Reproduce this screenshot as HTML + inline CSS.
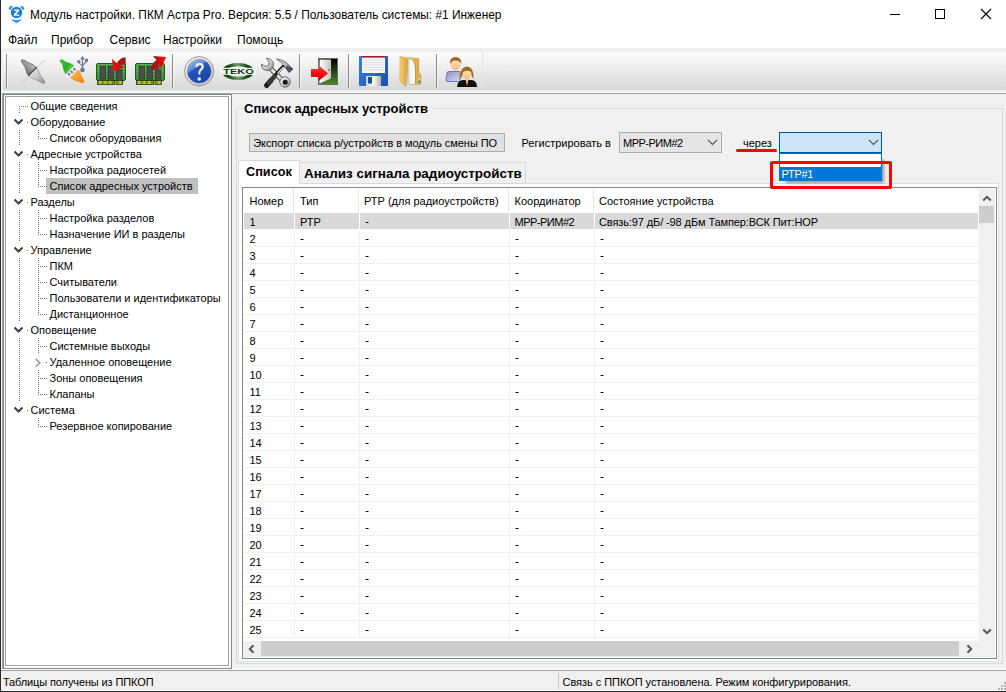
<!DOCTYPE html>
<html><head><meta charset="utf-8"><style>
html,body{margin:0;padding:0}
body{width:1006px;height:692px;position:relative;overflow:hidden;background:#f0f0f0;font-family:"Liberation Sans", sans-serif;}
</style></head><body>
<div style="position:absolute;left:0px;top:0px;width:1006px;height:48px;background:#ffffff;"></div>
<div style="position:absolute;left:1px;top:48px;width:1005px;height:4px;background:#efefef;"></div>
<svg style="position:absolute;left:6px;top:2px" width="22" height="24" viewBox="0 0 22 24">
<circle cx="5.2" cy="6.2" r="2.3" fill="#3a94dc"/>
<circle cx="15.8" cy="6.2" r="2.3" fill="#3a94dc"/>
<circle cx="10.5" cy="10.5" r="6.6" fill="#fff"/>
<circle cx="10.5" cy="10.5" r="5.7" fill="#1a7fd0"/>
<path d="M7.9 7.6 H13.2 V8.8 L9.9 12.6 H13.3 V13.8 H7.7 V12.6 L11 8.8 H7.9 Z" fill="#fff"/>
<path d="M5.6 17 Q10.5 19.6 15.4 17 L14.6 18.4 Q10.5 21.6 6.4 18.4 Z" fill="#2a8ad8"/>
<path d="M7.5 19.6 Q10.5 21.2 13.5 19.6 L10.5 21.6 Z" fill="#2a8ad8"/>
</svg>
<div style="position:absolute;left:30px;top:5px;line-height:20px;font-size:11.9px;font-weight:normal;color:#000;white-space:pre;">Модуль настройки. ПКМ Астра Pro. Версия: 5.5 / Пользователь системы: #1 Инженер</div>
<div style="position:absolute;left:890px;top:14px;width:10px;height:1px;background:#000;"></div>
<div style="position:absolute;left:935px;top:9px;width:8px;height:8px;border:1px solid #000;background:transparent;"></div>
<svg style="position:absolute;left:980px;top:8px" width="12" height="12" viewBox="0 0 12 12"><path d="M1 1 L11 11 M11 1 L1 11" stroke="#000" stroke-width="1.1"/></svg>
<div style="position:absolute;left:8px;top:30px;line-height:20px;font-size:12px;font-weight:normal;color:#000;white-space:pre;">Файл</div>
<div style="position:absolute;left:51px;top:30px;line-height:20px;font-size:12px;font-weight:normal;color:#000;white-space:pre;">Прибор</div>
<div style="position:absolute;left:109.5px;top:30px;line-height:20px;font-size:12px;font-weight:normal;color:#000;white-space:pre;">Сервис</div>
<div style="position:absolute;left:163px;top:30px;line-height:20px;font-size:12px;font-weight:normal;color:#000;white-space:pre;">Настройки</div>
<div style="position:absolute;left:237px;top:30px;line-height:20px;font-size:12px;font-weight:normal;color:#000;white-space:pre;">Помощь</div>
<div style="position:absolute;left:3px;top:52px;width:1003px;height:38px;background:linear-gradient(#fcfcfc,#ebebeb 50%,#d8d8d8)"></div>
<div style="position:absolute;left:6px;top:54px;width:1px;height:34px;background:#8a8a8a;"></div>
<div style="position:absolute;left:7px;top:54px;width:1px;height:34px;background:rgba(255,255,255,0.6);"></div>
<div style="position:absolute;left:172px;top:54px;width:1px;height:34px;background:#8a8a8a;"></div>
<div style="position:absolute;left:173px;top:54px;width:1px;height:34px;background:rgba(255,255,255,0.6);"></div>
<div style="position:absolute;left:299px;top:54px;width:1px;height:34px;background:#8a8a8a;"></div>
<div style="position:absolute;left:300px;top:54px;width:1px;height:34px;background:rgba(255,255,255,0.6);"></div>
<div style="position:absolute;left:348px;top:54px;width:1px;height:34px;background:#8a8a8a;"></div>
<div style="position:absolute;left:349px;top:54px;width:1px;height:34px;background:rgba(255,255,255,0.6);"></div>
<div style="position:absolute;left:436px;top:54px;width:1px;height:34px;background:#8a8a8a;"></div>
<div style="position:absolute;left:437px;top:54px;width:1px;height:34px;background:rgba(255,255,255,0.6);"></div>
<div style="position:absolute;left:482px;top:53px;width:1px;height:36px;background:#e4e4e4;"></div>
<svg style="position:absolute;left:18px;top:54px" width="32" height="34" viewBox="0 0 32 34">
<defs>
<linearGradient id="g1" x1="0" y1="1" x2="1" y2="0"><stop offset="0" stop-color="#3a3a3a"/><stop offset="0.4" stop-color="#8a8a8a"/><stop offset="1" stop-color="#e0e0e0"/></linearGradient>
<linearGradient id="g2" x1="0" y1="0" x2="1" y2="1"><stop offset="0" stop-color="#f4f4f4"/><stop offset="0.55" stop-color="#c8c8c8"/><stop offset="1" stop-color="#8a8a8a"/></linearGradient>
</defs>
<path d="M26.5 6 L3.5 29.5" stroke="#c4c4c4" stroke-width="1"/>
<path d="M3.5 6 Q4 5.3 7 6.6 Q9 8.3 13 9.8 Q16 11 18.5 13.5 L10.5 21.5 Q8.5 19.5 8 16 Q7 12 5 10 Q3 8 3.5 6 Z" fill="url(#g1)" stroke="#4a4a4a" stroke-width="0.6"/>
<path d="M10.5 21.5 L18.5 13.5 Q20.5 15.5 21.5 19 Q22.5 22.5 25 25 Q27.8 27.8 26.5 29.2 Q25 29.8 22 27.8 Q18 25.5 14.5 24.5 Q12 23.5 10.5 21.5 Z" fill="url(#g2)" stroke="#8a8a8a" stroke-width="0.6"/>
<path d="M10.2 21.8 L18.8 13.2" stroke="#4a4a4a" stroke-width="1.3"/>
</svg>
<svg style="position:absolute;left:56px;top:54px" width="36" height="34" viewBox="0 0 36 34">
<defs>
<linearGradient id="gg" x1="0" y1="0" x2="1" y2="0.6"><stop offset="0" stop-color="#4ad038"/><stop offset="0.6" stop-color="#28b020"/><stop offset="1" stop-color="#7ae070"/></linearGradient>
<linearGradient id="go" x1="0" y1="0" x2="1" y2="1"><stop offset="0" stop-color="#ffc060"/><stop offset="1" stop-color="#f08000"/></linearGradient>
</defs>
<path d="M4 6.5 Q5 5.3 7.5 6.3 L9.5 8 Q14 9 17.8 11.5 L9.5 19.8 Q7 15 6.5 10 Q4 8 4 6.5 Z" fill="url(#gg)" stroke="#1a8a1a" stroke-width="0.5"/>
<path d="M12 19.2 L14 21.2 M14.7 16.8 L16.7 18.8 M17.4 14.4 L19.4 16.4" stroke="#6a7090" stroke-width="1.7"/>
<path d="M14.5 24 L22.5 16 Q25 19 25.5 22.5 Q28.5 26 28 28.5 Q26 29.5 24 28 Q19 27 14.5 24 Z" fill="url(#go)" stroke="#e88a20" stroke-width="0.5"/>
<g stroke="#6e7490" fill="#6e7490">
<path d="M26.5 3.5 V16" stroke-width="1.2"/>
<path d="M24.2 5.5 L26.5 2 L28.8 5.5 Z" stroke="none"/>
<path d="M22.8 8.5 L26.5 12.5 M30.5 7.5 L26.5 11.5" stroke-width="1.1" fill="none"/>
<circle cx="22.8" cy="7.6" r="1.7" stroke="none"/>
<rect x="29" y="4.8" width="3" height="3" stroke="none"/>
<circle cx="26.5" cy="16" r="2.3" stroke="none"/>
</g>
</svg>
<svg style="position:absolute;left:94px;top:54px" width="34" height="34" viewBox="0 0 34 34">
<defs>
<linearGradient id="gpcb" x1="0" y1="0" x2="0" y2="1"><stop offset="0" stop-color="#5aae4a"/><stop offset="1" stop-color="#2e8a2e"/></linearGradient>
<linearGradient id="gred1" x1="1" y1="0" x2="0" y2="1"><stop offset="0" stop-color="#8a1818"/><stop offset="0.45" stop-color="#c81010"/><stop offset="1" stop-color="#ff1010"/></linearGradient>
<pattern id="pc" width="1.25" height="4" patternUnits="userSpaceOnUse"><rect width="0.75" height="4" fill="#c8d040"/></pattern>
<g id="ram">
<rect x="2.5" y="9.5" width="29" height="17" rx="1.5" fill="url(#gpcb)" stroke="#1a5a1a" stroke-width="1"/>
<rect x="3.5" y="26.5" width="17" height="4" fill="#5a6a10" stroke="#1e3a08" stroke-width="0.8"/>
<rect x="3.9" y="26.9" width="16.2" height="3.2" fill="url(#pc)"/>
<rect x="22" y="26.5" width="6.5" height="4" fill="#5a6a10" stroke="#1e3a08" stroke-width="0.8"/>
<rect x="22.4" y="26.9" width="5.7" height="3.2" fill="url(#pc)"/>
<g fill="#8ad080"><circle cx="4.8" cy="14.5" r="0.6"/><circle cx="4.8" cy="17.5" r="0.6"/><circle cx="4.8" cy="20.5" r="0.6"/><circle cx="4.8" cy="23.5" r="0.6"/>
<circle cx="12.8" cy="14.5" r="0.6"/><circle cx="12.8" cy="17.5" r="0.6"/><circle cx="12.8" cy="20.5" r="0.6"/><circle cx="12.8" cy="23.5" r="0.6"/>
<circle cx="20.8" cy="17.5" r="0.6"/><circle cx="20.8" cy="20.5" r="0.6"/><circle cx="20.8" cy="23.5" r="0.6"/>
<circle cx="29.2" cy="17.5" r="0.6"/><circle cx="29.2" cy="20.5" r="0.6"/><circle cx="29.2" cy="23.5" r="0.6"/>
<circle cx="7.5" cy="11" r="0.6"/><circle cx="10" cy="11" r="0.6"/><circle cx="15.5" cy="11" r="0.6"/><circle cx="18" cy="11" r="0.6"/></g>
<rect x="6" y="12" width="5.5" height="13" fill="#4c4c4c" stroke="#262626" stroke-width="0.6"/>
<rect x="14" y="12" width="5.5" height="13" fill="#4c4c4c" stroke="#262626" stroke-width="0.6"/>
<rect x="22.5" y="16" width="5.5" height="9" fill="#4c4c4c" stroke="#262626" stroke-width="0.6"/>
</g>
</defs>
<use href="#ram"/>
<path d="M18 5 L19.5 17.8 L30.5 13 L26.5 11.2 Q28.5 9.8 31.6 11 L31.6 3.4 Q26 3.2 22.8 9.2 Z" fill="url(#gred1)"/>
</svg>
<svg style="position:absolute;left:133px;top:54px" width="34" height="34" viewBox="0 0 34 34">
<defs>
<linearGradient id="gred2" x1="0" y1="0" x2="1" y2="0"><stop offset="0" stop-color="#8a1818"/><stop offset="0.5" stop-color="#c81010"/><stop offset="1" stop-color="#ff1010"/></linearGradient>
</defs>
<use href="#ram"/>
<path d="M18.5 15.8 Q18 9.5 23.5 6 L20 2 L33 3 L28 15 L26.5 10.2 Q24.3 11.8 25.2 15.8 Z" fill="url(#gred2)"/>
<path d="M25.2 15.8 Q24.3 11.8 26.5 10.2 L27.2 12.5 Z" fill="#505050"/>
</svg>
<svg style="position:absolute;left:182px;top:54px" width="34" height="34" viewBox="0 0 34 34">
<defs>
<linearGradient id="gblue" x1="0" y1="0" x2="0.6" y2="1"><stop offset="0" stop-color="#a8c4f0"/><stop offset="0.42" stop-color="#5a88d8"/><stop offset="0.45" stop-color="#2a58c0"/><stop offset="1" stop-color="#1a3a98"/></linearGradient>
<linearGradient id="grim" x1="0" y1="0" x2="1" y2="1"><stop offset="0" stop-color="#ffffff"/><stop offset="1" stop-color="#c0c0c0"/></linearGradient>
</defs>
<circle cx="17.2" cy="17.2" r="14.6" fill="url(#grim)" stroke="#8a8a8a" stroke-width="0.9"/>
<circle cx="17.2" cy="17.2" r="12.1" fill="url(#gblue)" stroke="#a8a8a8" stroke-width="0.7"/>
<path d="M7 19 Q12 12 26 12 Q28 16 28.5 20 Q22 30 12 28 Q7 24 7 19 Z" fill="#2050b8" opacity="0.6"/>
<path d="M13.3 12.8 Q13.3 8.8 17.6 8.8 Q21.9 8.8 21.9 12.6 Q21.9 15.2 19.4 16.8 Q18.2 17.6 18.2 20.6 L16.2 20.6 Q16 16.8 18 15 Q19.4 13.8 19.4 12.6 Q19.4 10.9 17.6 10.9 Q15.8 10.9 15.8 13 Z" fill="#ece8dc"/>
<circle cx="17.2" cy="25" r="1.8" fill="#ece8dc"/>
</svg>
<svg style="position:absolute;left:218px;top:58px" width="40" height="26" viewBox="0 0 40 26">
<defs>
<linearGradient id="gteko" x1="0" y1="0" x2="1" y2="0"><stop offset="0" stop-color="#0a3a0a"/><stop offset="0.22" stop-color="#1e561e"/><stop offset="0.5" stop-color="#8aae8a"/><stop offset="0.78" stop-color="#1e561e"/><stop offset="1" stop-color="#0a3a0a"/></linearGradient>
<pattern id="hatch" width="1.6" height="1.6" patternUnits="userSpaceOnUse" patternTransform="rotate(45)"><rect width="0.8" height="1.6" fill="#0a3a0a" opacity="0.35"/></pattern>
</defs>
<ellipse cx="20" cy="13.5" rx="14.4" ry="6.9" fill="none" stroke="url(#gteko)" stroke-width="3.2"/>
<ellipse cx="20" cy="13.5" rx="14.4" ry="6.9" fill="none" stroke="url(#hatch)" stroke-width="3.2"/>
<rect x="2" y="9.8" width="36" height="7" fill="#f2f2f2"/>
<text x="20.5" y="16.2" text-anchor="middle" font-family="Liberation Sans" font-weight="bold" font-size="7.6" fill="#0a3a0a" textLength="30.5" lengthAdjust="spacingAndGlyphs">TEKO</text>
</svg>
<svg style="position:absolute;left:258px;top:54px" width="38" height="36" viewBox="0 0 38 36">
<defs>
<linearGradient id="gsil" x1="0" y1="0" x2="1" y2="1"><stop offset="0" stop-color="#ffffff"/><stop offset="0.6" stop-color="#c8c8c8"/><stop offset="1" stop-color="#7a7a7a"/></linearGradient>
<linearGradient id="ghead" x1="0" y1="0" x2="1" y2="1"><stop offset="0" stop-color="#f4f4f8"/><stop offset="0.5" stop-color="#b8b8c0"/><stop offset="1" stop-color="#3a4050"/></linearGradient>
<linearGradient id="ghandle" x1="0" y1="0" x2="1" y2="0"><stop offset="0" stop-color="#1a1a1a"/><stop offset="0.5" stop-color="#4a4a4a"/><stop offset="1" stop-color="#1a1a1a"/></linearGradient>
</defs>
<path d="M12.5 14.5 L25 27" stroke="#4a4a4a" stroke-width="5" stroke-linecap="round"/>
<path d="M12.5 14.5 L25 27" stroke="#e4e4e4" stroke-width="3" stroke-linecap="round"/>
<path d="M8.3 4.3 Q14.5 4.5 15.5 10 Q15.8 14 12.5 16 Q8 17.5 5 15 Q3.2 13 3.5 10 L6.5 12 Q9 12.8 10.5 11 Q12 9 10.5 7 Z" fill="url(#gsil)" stroke="#505050" stroke-width="0.8"/>
<circle cx="27" cy="28" r="5.2" fill="url(#gsil)" stroke="#505050" stroke-width="0.8"/>
<circle cx="27.2" cy="28.2" r="2.5" fill="#141414"/>
<path d="M25 12.5 L9 30" stroke="#1a1a1a" stroke-width="3.2" stroke-linecap="round"/>
<path d="M13 26.5 L8.5 31.5" stroke="#1e1e1e" stroke-width="5" stroke-linecap="round"/>
<path d="M16.5 22.5 L11 28.5" stroke="#383838" stroke-width="4.4" stroke-linecap="round"/>
<path d="M25.5 13 L19.5 19.5" stroke="#d8d8d8" stroke-width="1.2"/>
<path d="M18.5 5 Q24 5.5 28 8.5 L35 15 L31 18.5 L23.5 8.5 Q21 6.5 18.5 5 Z" fill="url(#ghead)" stroke="#3a3a3a" stroke-width="0.7"/>
<path d="M29 11.5 L35 15 L31 18.5 L27.5 13.5 Z" fill="#4a5060"/>
</svg>
<svg style="position:absolute;left:306px;top:54px" width="36" height="36" viewBox="0 0 36 36">
<defs>
<linearGradient id="gdoor" x1="0" y1="0" x2="0" y2="1"><stop offset="0" stop-color="#000"/><stop offset="1" stop-color="#4a8a2a"/></linearGradient>
<linearGradient id="gwdoor" x1="0" y1="0" x2="1" y2="0"><stop offset="0" stop-color="#ffffff"/><stop offset="1" stop-color="#c4c4bc"/></linearGradient>
<linearGradient id="garr" x1="0" y1="0" x2="0" y2="1"><stop offset="0" stop-color="#ff6060"/><stop offset="0.45" stop-color="#ff1010"/><stop offset="1" stop-color="#c00000"/></linearGradient>
</defs>
<rect x="12.5" y="4.5" width="19" height="26" fill="url(#gdoor)" stroke="#6a6a6a" stroke-width="1"/>
<path d="M13.5 5.5 L25 5.5 L25 24.5 L13.5 29.5 Z" fill="url(#gwdoor)"/>
<circle cx="23" cy="16" r="0.8" fill="#333"/>
<path d="M5 15 L12.5 15 L12.5 11 L22 19.5 L12.5 27 L12.5 23 L5 23 Z" fill="url(#garr)"/>
</svg>
<svg style="position:absolute;left:354px;top:52px" width="38" height="38" viewBox="0 0 38 38">
<defs>
<linearGradient id="gfl" x1="0" y1="0" x2="1" y2="1"><stop offset="0" stop-color="#3a80e0"/><stop offset="1" stop-color="#1a50b0"/></linearGradient>
<linearGradient id="gsh" x1="0" y1="0" x2="1" y2="0"><stop offset="0" stop-color="#d0d0d0"/><stop offset="0.5" stop-color="#fafafa"/><stop offset="1" stop-color="#b0b0b0"/></linearGradient>
</defs>
<path d="M5 4 H34 V33 Q34 34 33 34 H6 Q5 34 5 33 Z" fill="url(#gfl)"/>
<rect x="8" y="4" width="23" height="17" fill="#f8f8f8"/>
<rect x="8" y="4" width="23" height="1.6" fill="#a01830"/>
<g fill="#d4d4d4"><rect x="9" y="7.5" width="21" height="0.8"/><rect x="9" y="10" width="21" height="0.8"/><rect x="9" y="12.5" width="21" height="0.8"/><rect x="9" y="15" width="21" height="0.8"/><rect x="9" y="17.5" width="21" height="0.8"/></g>
<rect x="12" y="24" width="15" height="10" fill="url(#gsh)"/>
<rect x="14" y="25" width="4" height="6.5" fill="#1a4ab0"/>
</svg>
<svg style="position:absolute;left:394px;top:52px" width="34" height="38" viewBox="0 0 34 38">
<defs>
<linearGradient id="gfo" x1="0" y1="0" x2="1" y2="0"><stop offset="0" stop-color="#f8d878"/><stop offset="0.3" stop-color="#eec060"/><stop offset="1" stop-color="#d8a040"/></linearGradient>
<linearGradient id="gback" x1="0" y1="0" x2="1" y2="0"><stop offset="0" stop-color="#f0c870"/><stop offset="1" stop-color="#d8a848"/></linearGradient>
<linearGradient id="gpap" x1="0" y1="0" x2="1" y2="0"><stop offset="0" stop-color="#c0c0c0"/><stop offset="0.4" stop-color="#f4f4f4"/><stop offset="1" stop-color="#ffffff"/></linearGradient>
</defs>
<path d="M8 5 L25 6.5 L25 22 L27 22 L27 32.5 L16 32.5 Z" fill="url(#gback)" stroke="#c89838" stroke-width="0.4"/>
<path d="M13.5 7 Q17.5 6.5 19 9 Q21 12 21 16 L21 32 L13.5 32 Z" fill="url(#gpap)"/>
<path d="M19 9 Q21 12 21 16 L21 32 L22 32 L22 15 Q22 10.5 19 8 Z" fill="#b88838" opacity="0.6"/>
<path d="M6 4 L13.5 8 L12 34.5 L6 29.5 Z" fill="url(#gfo)" stroke="#c89030" stroke-width="0.5"/>
<rect x="24.6" y="26" width="1.2" height="3" fill="#e8e8e8"/>
<rect x="24.5" y="28.5" width="1.6" height="2.4" fill="#2a6af0"/>
</svg>
<svg style="position:absolute;left:442px;top:54px" width="38" height="36" viewBox="0 0 38 36">
<defs>
<linearGradient id="gshirt" x1="0" y1="0" x2="1" y2="1"><stop offset="0" stop-color="#8890c0"/><stop offset="1" stop-color="#d8dcf0"/></linearGradient>
<linearGradient id="gface" x1="0" y1="0" x2="0" y2="1"><stop offset="0" stop-color="#ffe8c8"/><stop offset="1" stop-color="#f0b880"/></linearGradient>
</defs>
<path d="M5 19 Q5 17.5 7 17.5 H18 V27.5 H6 Q4 27.5 4 26 Z" fill="url(#gshirt)" stroke="#5a62b0" stroke-width="0.8"/>
<ellipse cx="13.5" cy="10" rx="5" ry="6.5" fill="url(#gface)"/>
<path d="M8 10 Q7.5 3 13.5 3 Q19.5 3 19.5 10 Q18 6 12 6.5 Q9.5 7 8 10 Z" fill="#9a6a20"/>
<path d="M15 33 Q15 27 21 26 H30 Q35 27 35 33 Z" fill="#101010"/>
<path d="M23.5 26 L25 32 L26.5 26 Z" fill="#f0b870"/>
<path d="M18 25 Q17.5 13 25 12.5 Q32 13 31.5 25 Q29 22 29 18 Q26 16 21 18 Q21 22 18 25 Z" fill="#a06a1a"/>
<ellipse cx="25" cy="20" rx="4" ry="5.5" fill="url(#gface)"/>
<path d="M21 18 Q22 13.5 26 14 Q29.5 15 29 18 Q26 15.5 21 18 Z" fill="#a06a1a"/>
</svg>

<div style="position:absolute;left:1px;top:90px;width:1005px;height:2px;background:#f0f0f0;"></div>
<div style="position:absolute;left:1px;top:92px;width:1005px;height:1px;background:#ffffff;"></div>
<div style="position:absolute;left:2px;top:93px;width:1004px;height:1px;background:#a0a0a0;"></div>
<div style="position:absolute;left:0px;top:0px;width:1px;height:692px;background:#2b2b2b;"></div>
<div style="position:absolute;left:1px;top:93px;width:1px;height:577px;background:#f8f8f8;"></div>
<div style="position:absolute;left:2px;top:93px;width:1px;height:576px;background:#a0a0a0;"></div>
<div style="position:absolute;left:3px;top:94px;width:227px;height:573px;border:1px solid #828790;background:#ffffff;"></div>
<div style="position:absolute;left:5px;top:96px;width:222px;height:568px;border:1px solid #a0a0a0;background:#ffffff;"></div>
<div style="position:absolute;left:30.5px;top:96px;line-height:20px;font-size:11px;font-weight:normal;color:#000;white-space:pre;">Общие сведения</div>
<div style="position:absolute;left:30.5px;top:112px;line-height:20px;font-size:11px;font-weight:normal;color:#000;white-space:pre;">Оборудование</div>
<div style="position:absolute;left:49.5px;top:128px;line-height:20px;font-size:11px;font-weight:normal;color:#000;white-space:pre;">Список оборудования</div>
<div style="position:absolute;left:30.5px;top:144px;line-height:20px;font-size:11px;font-weight:normal;color:#000;white-space:pre;">Адресные устройства</div>
<div style="position:absolute;left:49.5px;top:160px;line-height:20px;font-size:11px;font-weight:normal;color:#000;white-space:pre;">Настройка радиосетей</div>
<div style="position:absolute;left:46px;top:178px;width:152px;height:16px;background:#c0c0c0;"></div>
<div style="position:absolute;left:49.5px;top:176px;line-height:20px;font-size:11px;font-weight:normal;color:#000;white-space:pre;">Список адресных устройств</div>
<div style="position:absolute;left:30.5px;top:192px;line-height:20px;font-size:11px;font-weight:normal;color:#000;white-space:pre;">Разделы</div>
<div style="position:absolute;left:49.5px;top:208px;line-height:20px;font-size:11px;font-weight:normal;color:#000;white-space:pre;">Настройка разделов</div>
<div style="position:absolute;left:49.5px;top:224px;line-height:20px;font-size:11px;font-weight:normal;color:#000;white-space:pre;">Назначение ИИ в разделы</div>
<div style="position:absolute;left:30.5px;top:240px;line-height:20px;font-size:11px;font-weight:normal;color:#000;white-space:pre;">Управление</div>
<div style="position:absolute;left:49.5px;top:256px;line-height:20px;font-size:11px;font-weight:normal;color:#000;white-space:pre;">ПКМ</div>
<div style="position:absolute;left:49.5px;top:272px;line-height:20px;font-size:11px;font-weight:normal;color:#000;white-space:pre;">Считыватели</div>
<div style="position:absolute;left:49.5px;top:288px;line-height:20px;font-size:11px;font-weight:normal;color:#000;white-space:pre;">Пользователи и идентификаторы</div>
<div style="position:absolute;left:49.5px;top:304px;line-height:20px;font-size:11px;font-weight:normal;color:#000;white-space:pre;">Дистанционное</div>
<div style="position:absolute;left:30.5px;top:320px;line-height:20px;font-size:11px;font-weight:normal;color:#000;white-space:pre;">Оповещение</div>
<div style="position:absolute;left:49.5px;top:336px;line-height:20px;font-size:11px;font-weight:normal;color:#000;white-space:pre;">Системные выходы</div>
<div style="position:absolute;left:49.5px;top:352px;line-height:20px;font-size:11px;font-weight:normal;color:#000;white-space:pre;">Удаленное оповещение</div>
<div style="position:absolute;left:49.5px;top:368px;line-height:20px;font-size:11px;font-weight:normal;color:#000;white-space:pre;">Зоны оповещения</div>
<div style="position:absolute;left:49.5px;top:384px;line-height:20px;font-size:11px;font-weight:normal;color:#000;white-space:pre;">Клапаны</div>
<div style="position:absolute;left:30.5px;top:400px;line-height:20px;font-size:11px;font-weight:normal;color:#000;white-space:pre;">Система</div>
<div style="position:absolute;left:49.5px;top:416px;line-height:20px;font-size:11px;font-weight:normal;color:#000;white-space:pre;">Резервное копирование</div>
<svg style="position:absolute;left:0;top:0" width="240" height="692"><g fill="#7a7a7a"><rect x="19" y="106" width="1" height="1"/><rect x="21" y="106" width="1" height="1"/><rect x="23" y="106" width="1" height="1"/><rect x="25" y="106" width="1" height="1"/><rect x="27" y="106" width="1" height="1"/><rect x="27" y="122" width="1" height="1"/><rect x="38" y="138" width="1" height="1"/><rect x="40" y="138" width="1" height="1"/><rect x="42" y="138" width="1" height="1"/><rect x="44" y="138" width="1" height="1"/><rect x="46" y="138" width="1" height="1"/><rect x="27" y="154" width="1" height="1"/><rect x="38" y="170" width="1" height="1"/><rect x="40" y="170" width="1" height="1"/><rect x="42" y="170" width="1" height="1"/><rect x="44" y="170" width="1" height="1"/><rect x="46" y="170" width="1" height="1"/><rect x="38" y="186" width="1" height="1"/><rect x="40" y="186" width="1" height="1"/><rect x="42" y="186" width="1" height="1"/><rect x="44" y="186" width="1" height="1"/><rect x="46" y="186" width="1" height="1"/><rect x="27" y="202" width="1" height="1"/><rect x="38" y="218" width="1" height="1"/><rect x="40" y="218" width="1" height="1"/><rect x="42" y="218" width="1" height="1"/><rect x="44" y="218" width="1" height="1"/><rect x="46" y="218" width="1" height="1"/><rect x="38" y="234" width="1" height="1"/><rect x="40" y="234" width="1" height="1"/><rect x="42" y="234" width="1" height="1"/><rect x="44" y="234" width="1" height="1"/><rect x="46" y="234" width="1" height="1"/><rect x="27" y="250" width="1" height="1"/><rect x="38" y="266" width="1" height="1"/><rect x="40" y="266" width="1" height="1"/><rect x="42" y="266" width="1" height="1"/><rect x="44" y="266" width="1" height="1"/><rect x="46" y="266" width="1" height="1"/><rect x="38" y="282" width="1" height="1"/><rect x="40" y="282" width="1" height="1"/><rect x="42" y="282" width="1" height="1"/><rect x="44" y="282" width="1" height="1"/><rect x="46" y="282" width="1" height="1"/><rect x="38" y="298" width="1" height="1"/><rect x="40" y="298" width="1" height="1"/><rect x="42" y="298" width="1" height="1"/><rect x="44" y="298" width="1" height="1"/><rect x="46" y="298" width="1" height="1"/><rect x="38" y="314" width="1" height="1"/><rect x="40" y="314" width="1" height="1"/><rect x="42" y="314" width="1" height="1"/><rect x="44" y="314" width="1" height="1"/><rect x="46" y="314" width="1" height="1"/><rect x="27" y="330" width="1" height="1"/><rect x="38" y="346" width="1" height="1"/><rect x="40" y="346" width="1" height="1"/><rect x="42" y="346" width="1" height="1"/><rect x="44" y="346" width="1" height="1"/><rect x="46" y="346" width="1" height="1"/><rect x="46" y="362" width="1" height="1"/><rect x="38" y="378" width="1" height="1"/><rect x="40" y="378" width="1" height="1"/><rect x="42" y="378" width="1" height="1"/><rect x="44" y="378" width="1" height="1"/><rect x="46" y="378" width="1" height="1"/><rect x="38" y="394" width="1" height="1"/><rect x="40" y="394" width="1" height="1"/><rect x="42" y="394" width="1" height="1"/><rect x="44" y="394" width="1" height="1"/><rect x="46" y="394" width="1" height="1"/><rect x="27" y="410" width="1" height="1"/><rect x="38" y="426" width="1" height="1"/><rect x="40" y="426" width="1" height="1"/><rect x="42" y="426" width="1" height="1"/><rect x="44" y="426" width="1" height="1"/><rect x="46" y="426" width="1" height="1"/><rect x="19" y="106" width="1" height="1"/><rect x="19" y="108" width="1" height="1"/><rect x="19" y="110" width="1" height="1"/><rect x="19" y="112" width="1" height="1"/><rect x="19" y="106" width="1" height="1"/><rect x="19" y="108" width="1" height="1"/><rect x="19" y="110" width="1" height="1"/><rect x="19" y="112" width="1" height="1"/><rect x="19" y="130" width="1" height="1"/><rect x="19" y="132" width="1" height="1"/><rect x="19" y="134" width="1" height="1"/><rect x="19" y="136" width="1" height="1"/><rect x="19" y="138" width="1" height="1"/><rect x="19" y="140" width="1" height="1"/><rect x="19" y="142" width="1" height="1"/><rect x="19" y="144" width="1" height="1"/><rect x="19" y="162" width="1" height="1"/><rect x="19" y="164" width="1" height="1"/><rect x="19" y="166" width="1" height="1"/><rect x="19" y="168" width="1" height="1"/><rect x="19" y="170" width="1" height="1"/><rect x="19" y="172" width="1" height="1"/><rect x="19" y="174" width="1" height="1"/><rect x="19" y="176" width="1" height="1"/><rect x="19" y="178" width="1" height="1"/><rect x="19" y="180" width="1" height="1"/><rect x="19" y="182" width="1" height="1"/><rect x="19" y="184" width="1" height="1"/><rect x="19" y="186" width="1" height="1"/><rect x="19" y="188" width="1" height="1"/><rect x="19" y="190" width="1" height="1"/><rect x="19" y="192" width="1" height="1"/><rect x="19" y="210" width="1" height="1"/><rect x="19" y="212" width="1" height="1"/><rect x="19" y="214" width="1" height="1"/><rect x="19" y="216" width="1" height="1"/><rect x="19" y="218" width="1" height="1"/><rect x="19" y="220" width="1" height="1"/><rect x="19" y="222" width="1" height="1"/><rect x="19" y="224" width="1" height="1"/><rect x="19" y="226" width="1" height="1"/><rect x="19" y="228" width="1" height="1"/><rect x="19" y="230" width="1" height="1"/><rect x="19" y="232" width="1" height="1"/><rect x="19" y="234" width="1" height="1"/><rect x="19" y="236" width="1" height="1"/><rect x="19" y="238" width="1" height="1"/><rect x="19" y="240" width="1" height="1"/><rect x="19" y="258" width="1" height="1"/><rect x="19" y="260" width="1" height="1"/><rect x="19" y="262" width="1" height="1"/><rect x="19" y="264" width="1" height="1"/><rect x="19" y="266" width="1" height="1"/><rect x="19" y="268" width="1" height="1"/><rect x="19" y="270" width="1" height="1"/><rect x="19" y="272" width="1" height="1"/><rect x="19" y="274" width="1" height="1"/><rect x="19" y="276" width="1" height="1"/><rect x="19" y="278" width="1" height="1"/><rect x="19" y="280" width="1" height="1"/><rect x="19" y="282" width="1" height="1"/><rect x="19" y="284" width="1" height="1"/><rect x="19" y="286" width="1" height="1"/><rect x="19" y="288" width="1" height="1"/><rect x="19" y="290" width="1" height="1"/><rect x="19" y="292" width="1" height="1"/><rect x="19" y="294" width="1" height="1"/><rect x="19" y="296" width="1" height="1"/><rect x="19" y="298" width="1" height="1"/><rect x="19" y="300" width="1" height="1"/><rect x="19" y="302" width="1" height="1"/><rect x="19" y="304" width="1" height="1"/><rect x="19" y="306" width="1" height="1"/><rect x="19" y="308" width="1" height="1"/><rect x="19" y="310" width="1" height="1"/><rect x="19" y="312" width="1" height="1"/><rect x="19" y="314" width="1" height="1"/><rect x="19" y="316" width="1" height="1"/><rect x="19" y="318" width="1" height="1"/><rect x="19" y="320" width="1" height="1"/><rect x="19" y="338" width="1" height="1"/><rect x="19" y="340" width="1" height="1"/><rect x="19" y="342" width="1" height="1"/><rect x="19" y="344" width="1" height="1"/><rect x="19" y="346" width="1" height="1"/><rect x="19" y="348" width="1" height="1"/><rect x="19" y="350" width="1" height="1"/><rect x="19" y="352" width="1" height="1"/><rect x="19" y="354" width="1" height="1"/><rect x="19" y="356" width="1" height="1"/><rect x="19" y="358" width="1" height="1"/><rect x="19" y="360" width="1" height="1"/><rect x="19" y="362" width="1" height="1"/><rect x="19" y="364" width="1" height="1"/><rect x="19" y="366" width="1" height="1"/><rect x="19" y="368" width="1" height="1"/><rect x="19" y="370" width="1" height="1"/><rect x="19" y="372" width="1" height="1"/><rect x="19" y="374" width="1" height="1"/><rect x="19" y="376" width="1" height="1"/><rect x="19" y="378" width="1" height="1"/><rect x="19" y="380" width="1" height="1"/><rect x="19" y="382" width="1" height="1"/><rect x="19" y="384" width="1" height="1"/><rect x="19" y="386" width="1" height="1"/><rect x="19" y="388" width="1" height="1"/><rect x="19" y="390" width="1" height="1"/><rect x="19" y="392" width="1" height="1"/><rect x="19" y="394" width="1" height="1"/><rect x="19" y="396" width="1" height="1"/><rect x="19" y="398" width="1" height="1"/><rect x="19" y="400" width="1" height="1"/><rect x="38" y="130" width="1" height="1"/><rect x="38" y="132" width="1" height="1"/><rect x="38" y="134" width="1" height="1"/><rect x="38" y="136" width="1" height="1"/><rect x="38" y="138" width="1" height="1"/><rect x="38" y="162" width="1" height="1"/><rect x="38" y="164" width="1" height="1"/><rect x="38" y="166" width="1" height="1"/><rect x="38" y="168" width="1" height="1"/><rect x="38" y="170" width="1" height="1"/><rect x="38" y="172" width="1" height="1"/><rect x="38" y="174" width="1" height="1"/><rect x="38" y="176" width="1" height="1"/><rect x="38" y="178" width="1" height="1"/><rect x="38" y="180" width="1" height="1"/><rect x="38" y="182" width="1" height="1"/><rect x="38" y="184" width="1" height="1"/><rect x="38" y="186" width="1" height="1"/><rect x="38" y="210" width="1" height="1"/><rect x="38" y="212" width="1" height="1"/><rect x="38" y="214" width="1" height="1"/><rect x="38" y="216" width="1" height="1"/><rect x="38" y="218" width="1" height="1"/><rect x="38" y="220" width="1" height="1"/><rect x="38" y="222" width="1" height="1"/><rect x="38" y="224" width="1" height="1"/><rect x="38" y="226" width="1" height="1"/><rect x="38" y="228" width="1" height="1"/><rect x="38" y="230" width="1" height="1"/><rect x="38" y="232" width="1" height="1"/><rect x="38" y="234" width="1" height="1"/><rect x="38" y="258" width="1" height="1"/><rect x="38" y="260" width="1" height="1"/><rect x="38" y="262" width="1" height="1"/><rect x="38" y="264" width="1" height="1"/><rect x="38" y="266" width="1" height="1"/><rect x="38" y="268" width="1" height="1"/><rect x="38" y="270" width="1" height="1"/><rect x="38" y="272" width="1" height="1"/><rect x="38" y="274" width="1" height="1"/><rect x="38" y="276" width="1" height="1"/><rect x="38" y="278" width="1" height="1"/><rect x="38" y="280" width="1" height="1"/><rect x="38" y="282" width="1" height="1"/><rect x="38" y="284" width="1" height="1"/><rect x="38" y="286" width="1" height="1"/><rect x="38" y="288" width="1" height="1"/><rect x="38" y="290" width="1" height="1"/><rect x="38" y="292" width="1" height="1"/><rect x="38" y="294" width="1" height="1"/><rect x="38" y="296" width="1" height="1"/><rect x="38" y="298" width="1" height="1"/><rect x="38" y="300" width="1" height="1"/><rect x="38" y="302" width="1" height="1"/><rect x="38" y="304" width="1" height="1"/><rect x="38" y="306" width="1" height="1"/><rect x="38" y="308" width="1" height="1"/><rect x="38" y="310" width="1" height="1"/><rect x="38" y="312" width="1" height="1"/><rect x="38" y="314" width="1" height="1"/><rect x="38" y="338" width="1" height="1"/><rect x="38" y="340" width="1" height="1"/><rect x="38" y="342" width="1" height="1"/><rect x="38" y="344" width="1" height="1"/><rect x="38" y="346" width="1" height="1"/><rect x="38" y="348" width="1" height="1"/><rect x="38" y="350" width="1" height="1"/><rect x="38" y="352" width="1" height="1"/><rect x="38" y="370" width="1" height="1"/><rect x="38" y="372" width="1" height="1"/><rect x="38" y="374" width="1" height="1"/><rect x="38" y="376" width="1" height="1"/><rect x="38" y="378" width="1" height="1"/><rect x="38" y="380" width="1" height="1"/><rect x="38" y="382" width="1" height="1"/><rect x="38" y="384" width="1" height="1"/><rect x="38" y="386" width="1" height="1"/><rect x="38" y="388" width="1" height="1"/><rect x="38" y="390" width="1" height="1"/><rect x="38" y="392" width="1" height="1"/><rect x="38" y="394" width="1" height="1"/><rect x="38" y="418" width="1" height="1"/><rect x="38" y="420" width="1" height="1"/><rect x="38" y="422" width="1" height="1"/><rect x="38" y="424" width="1" height="1"/><rect x="38" y="426" width="1" height="1"/></g><path d="M14.5 119.5 L18.5 123.5 L22.5 119.5" stroke="#404040" stroke-width="2" fill="none"/><path d="M14.5 151.5 L18.5 155.5 L22.5 151.5" stroke="#404040" stroke-width="2" fill="none"/><path d="M14.5 199.5 L18.5 203.5 L22.5 199.5" stroke="#404040" stroke-width="2" fill="none"/><path d="M14.5 247.5 L18.5 251.5 L22.5 247.5" stroke="#404040" stroke-width="2" fill="none"/><path d="M14.5 327.5 L18.5 331.5 L22.5 327.5" stroke="#404040" stroke-width="2" fill="none"/><path d="M35.8 358.8 L39.8 362.8 L35.8 366.8" stroke="#a6a6a6" stroke-width="1.8" fill="none"/><path d="M14.5 407.5 L18.5 411.5 L22.5 407.5" stroke="#404040" stroke-width="2" fill="none"/></svg>
<div style="position:absolute;left:236px;top:108px;width:765px;height:554px;border:1px solid #dcdcdc;background:transparent;"></div>
<div style="position:absolute;left:243px;top:100px;width:190px;height:16px;background:#f0f0f0;"></div>
<div style="position:absolute;left:244px;top:99px;line-height:20px;font-size:13px;font-weight:bold;color:#000;white-space:pre;">Список адресных устройств</div>
<div style="position:absolute;left:249px;top:133px;width:254px;height:17px;border:1px solid #adadad;background:#e1e1e1;"></div>
<div style="position:absolute;left:253.2px;top:133px;line-height:20px;font-size:11px;font-weight:normal;color:#000;white-space:pre;letter-spacing:-0.06px">Экспорт списка р/устройств в модуль смены ПО</div>
<div style="position:absolute;left:521.5px;top:133px;line-height:20px;font-size:11px;font-weight:normal;color:#000;white-space:pre;">Регистрировать в</div>
<div style="position:absolute;left:619px;top:132px;width:101px;height:19px;border:1px solid #adadad;background:#e5e5e5;"></div>
<div style="position:absolute;left:623px;top:133px;line-height:20px;font-size:11px;font-weight:normal;color:#000;white-space:pre;letter-spacing:-0.5px">МРР-РИМ#2</div>
<svg style="position:absolute;left:707px;top:139px" width="11" height="7"><path d="M0.8 0.8 L5.5 5.5 L10.2 0.8" stroke="#505050" stroke-width="1.1" fill="none"/></svg>
<div style="position:absolute;left:743px;top:133px;line-height:20px;font-size:11px;font-weight:normal;color:#000;white-space:pre;">через</div>
<div style="position:absolute;left:736px;top:149px;width:41px;height:3px;background:#f00;border-radius:1.5px"></div>
<div style="position:absolute;left:238px;top:183px;width:759px;height:477px;border:1px solid #dcdcdc;background:#ffffff;"></div>
<div style="position:absolute;left:299px;top:162px;width:225px;height:20px;border:1px solid #d9d9d9;background:#f0f0f0;"></div>
<div style="position:absolute;left:238px;top:160px;width:60px;height:23px;border:1px solid #d9d9d9;border-bottom:none;background:#fff"></div>
<div style="position:absolute;left:246px;top:162px;line-height:20px;font-size:12.7px;font-weight:bold;color:#000;white-space:pre;">Список</div>
<div style="position:absolute;left:304px;top:164px;line-height:20px;font-size:13.45px;font-weight:bold;color:#000;white-space:pre;">Анализ сигнала радиоустройств</div>
<div style="position:absolute;left:242px;top:187px;width:753px;height:470px;border:1px solid #828790;background:#ffffff;"></div>
<div style="position:absolute;left:293px;top:189px;width:1px;height:23px;background:#e5e5e5;"></div>
<div style="position:absolute;left:358px;top:189px;width:1px;height:23px;background:#e5e5e5;"></div>
<div style="position:absolute;left:508px;top:189px;width:1px;height:23px;background:#e5e5e5;"></div>
<div style="position:absolute;left:593px;top:189px;width:1px;height:23px;background:#e5e5e5;"></div>
<div style="position:absolute;left:249.5px;top:191px;line-height:20px;font-size:11px;font-weight:normal;color:#000;white-space:pre;">Номер</div>
<div style="position:absolute;left:300px;top:191px;line-height:20px;font-size:11px;font-weight:normal;color:#000;white-space:pre;">Тип</div>
<div style="position:absolute;left:364px;top:191px;line-height:20px;font-size:11px;font-weight:normal;color:#000;white-space:pre;">РТР (для радиоустройств)</div>
<div style="position:absolute;left:514.5px;top:191px;line-height:20px;font-size:11px;font-weight:normal;color:#000;white-space:pre;">Координатор</div>
<div style="position:absolute;left:599px;top:191px;line-height:20px;font-size:11px;font-weight:normal;color:#000;white-space:pre;">Состояние устройства</div>
<div style="position:absolute;left:244px;top:213px;width:734px;height:16px;background:#d9d9d9;"></div>
<div style="position:absolute;left:294px;top:213px;width:1px;height:16px;background:#ffffff;"></div>
<div style="position:absolute;left:359px;top:213px;width:1px;height:16px;background:#ffffff;"></div>
<div style="position:absolute;left:509px;top:213px;width:1px;height:16px;background:#ffffff;"></div>
<div style="position:absolute;left:594px;top:213px;width:1px;height:16px;background:#ffffff;"></div>
<div style="position:absolute;left:249.5px;top:212px;line-height:20px;font-size:11px;font-weight:normal;color:#000;white-space:pre;">1</div>
<div style="position:absolute;left:300px;top:212px;line-height:20px;font-size:11px;font-weight:normal;color:#000;white-space:pre;">РТР</div>
<div style="position:absolute;left:365px;top:222px;width:1px;height:1px;background:#d89850;"></div>
<div style="position:absolute;left:366px;top:222px;width:2px;height:1px;background:#000;"></div>
<div style="position:absolute;left:368px;top:222px;width:1px;height:1px;background:#4a90e0;"></div>
<div style="position:absolute;left:514.5px;top:212px;line-height:20px;font-size:11px;font-weight:normal;color:#000;white-space:pre;letter-spacing:-0.5px">МРР-РИМ#2</div>
<div style="position:absolute;left:599px;top:212px;line-height:20px;font-size:11px;font-weight:normal;color:#000;white-space:pre;letter-spacing:-0.11px">Связь:97 дБ/ -98 дБм Тампер:ВСК Пит:НОР</div>
<div style="position:absolute;left:244px;top:246px;width:735px;height:1px;background:#f0f0f0;"></div>
<div style="position:absolute;left:294px;top:230px;width:1px;height:17px;background:#f0f0f0;"></div>
<div style="position:absolute;left:359px;top:230px;width:1px;height:17px;background:#f0f0f0;"></div>
<div style="position:absolute;left:509px;top:230px;width:1px;height:17px;background:#f0f0f0;"></div>
<div style="position:absolute;left:594px;top:230px;width:1px;height:17px;background:#f0f0f0;"></div>
<div style="position:absolute;left:249.5px;top:229px;line-height:20px;font-size:11px;font-weight:normal;color:#000;white-space:pre;">2</div>
<div style="position:absolute;left:300px;top:239px;width:1px;height:1px;background:#d89850;"></div>
<div style="position:absolute;left:301px;top:239px;width:2px;height:1px;background:#000;"></div>
<div style="position:absolute;left:303px;top:239px;width:1px;height:1px;background:#4a90e0;"></div>
<div style="position:absolute;left:365px;top:239px;width:1px;height:1px;background:#d89850;"></div>
<div style="position:absolute;left:366px;top:239px;width:2px;height:1px;background:#000;"></div>
<div style="position:absolute;left:368px;top:239px;width:1px;height:1px;background:#4a90e0;"></div>
<div style="position:absolute;left:515px;top:239px;width:1px;height:1px;background:#d89850;"></div>
<div style="position:absolute;left:516px;top:239px;width:2px;height:1px;background:#000;"></div>
<div style="position:absolute;left:518px;top:239px;width:1px;height:1px;background:#4a90e0;"></div>
<div style="position:absolute;left:600px;top:239px;width:1px;height:1px;background:#d89850;"></div>
<div style="position:absolute;left:601px;top:239px;width:2px;height:1px;background:#000;"></div>
<div style="position:absolute;left:603px;top:239px;width:1px;height:1px;background:#4a90e0;"></div>
<div style="position:absolute;left:244px;top:263px;width:735px;height:1px;background:#f0f0f0;"></div>
<div style="position:absolute;left:294px;top:247px;width:1px;height:17px;background:#f0f0f0;"></div>
<div style="position:absolute;left:359px;top:247px;width:1px;height:17px;background:#f0f0f0;"></div>
<div style="position:absolute;left:509px;top:247px;width:1px;height:17px;background:#f0f0f0;"></div>
<div style="position:absolute;left:594px;top:247px;width:1px;height:17px;background:#f0f0f0;"></div>
<div style="position:absolute;left:249.5px;top:246px;line-height:20px;font-size:11px;font-weight:normal;color:#000;white-space:pre;">3</div>
<div style="position:absolute;left:300px;top:256px;width:1px;height:1px;background:#d89850;"></div>
<div style="position:absolute;left:301px;top:256px;width:2px;height:1px;background:#000;"></div>
<div style="position:absolute;left:303px;top:256px;width:1px;height:1px;background:#4a90e0;"></div>
<div style="position:absolute;left:365px;top:256px;width:1px;height:1px;background:#d89850;"></div>
<div style="position:absolute;left:366px;top:256px;width:2px;height:1px;background:#000;"></div>
<div style="position:absolute;left:368px;top:256px;width:1px;height:1px;background:#4a90e0;"></div>
<div style="position:absolute;left:515px;top:256px;width:1px;height:1px;background:#d89850;"></div>
<div style="position:absolute;left:516px;top:256px;width:2px;height:1px;background:#000;"></div>
<div style="position:absolute;left:518px;top:256px;width:1px;height:1px;background:#4a90e0;"></div>
<div style="position:absolute;left:600px;top:256px;width:1px;height:1px;background:#d89850;"></div>
<div style="position:absolute;left:601px;top:256px;width:2px;height:1px;background:#000;"></div>
<div style="position:absolute;left:603px;top:256px;width:1px;height:1px;background:#4a90e0;"></div>
<div style="position:absolute;left:244px;top:280px;width:735px;height:1px;background:#f0f0f0;"></div>
<div style="position:absolute;left:294px;top:264px;width:1px;height:17px;background:#f0f0f0;"></div>
<div style="position:absolute;left:359px;top:264px;width:1px;height:17px;background:#f0f0f0;"></div>
<div style="position:absolute;left:509px;top:264px;width:1px;height:17px;background:#f0f0f0;"></div>
<div style="position:absolute;left:594px;top:264px;width:1px;height:17px;background:#f0f0f0;"></div>
<div style="position:absolute;left:249.5px;top:263px;line-height:20px;font-size:11px;font-weight:normal;color:#000;white-space:pre;">4</div>
<div style="position:absolute;left:300px;top:273px;width:1px;height:1px;background:#d89850;"></div>
<div style="position:absolute;left:301px;top:273px;width:2px;height:1px;background:#000;"></div>
<div style="position:absolute;left:303px;top:273px;width:1px;height:1px;background:#4a90e0;"></div>
<div style="position:absolute;left:365px;top:273px;width:1px;height:1px;background:#d89850;"></div>
<div style="position:absolute;left:366px;top:273px;width:2px;height:1px;background:#000;"></div>
<div style="position:absolute;left:368px;top:273px;width:1px;height:1px;background:#4a90e0;"></div>
<div style="position:absolute;left:515px;top:273px;width:1px;height:1px;background:#d89850;"></div>
<div style="position:absolute;left:516px;top:273px;width:2px;height:1px;background:#000;"></div>
<div style="position:absolute;left:518px;top:273px;width:1px;height:1px;background:#4a90e0;"></div>
<div style="position:absolute;left:600px;top:273px;width:1px;height:1px;background:#d89850;"></div>
<div style="position:absolute;left:601px;top:273px;width:2px;height:1px;background:#000;"></div>
<div style="position:absolute;left:603px;top:273px;width:1px;height:1px;background:#4a90e0;"></div>
<div style="position:absolute;left:244px;top:297px;width:735px;height:1px;background:#f0f0f0;"></div>
<div style="position:absolute;left:294px;top:281px;width:1px;height:17px;background:#f0f0f0;"></div>
<div style="position:absolute;left:359px;top:281px;width:1px;height:17px;background:#f0f0f0;"></div>
<div style="position:absolute;left:509px;top:281px;width:1px;height:17px;background:#f0f0f0;"></div>
<div style="position:absolute;left:594px;top:281px;width:1px;height:17px;background:#f0f0f0;"></div>
<div style="position:absolute;left:249.5px;top:280px;line-height:20px;font-size:11px;font-weight:normal;color:#000;white-space:pre;">5</div>
<div style="position:absolute;left:300px;top:290px;width:1px;height:1px;background:#d89850;"></div>
<div style="position:absolute;left:301px;top:290px;width:2px;height:1px;background:#000;"></div>
<div style="position:absolute;left:303px;top:290px;width:1px;height:1px;background:#4a90e0;"></div>
<div style="position:absolute;left:365px;top:290px;width:1px;height:1px;background:#d89850;"></div>
<div style="position:absolute;left:366px;top:290px;width:2px;height:1px;background:#000;"></div>
<div style="position:absolute;left:368px;top:290px;width:1px;height:1px;background:#4a90e0;"></div>
<div style="position:absolute;left:515px;top:290px;width:1px;height:1px;background:#d89850;"></div>
<div style="position:absolute;left:516px;top:290px;width:2px;height:1px;background:#000;"></div>
<div style="position:absolute;left:518px;top:290px;width:1px;height:1px;background:#4a90e0;"></div>
<div style="position:absolute;left:600px;top:290px;width:1px;height:1px;background:#d89850;"></div>
<div style="position:absolute;left:601px;top:290px;width:2px;height:1px;background:#000;"></div>
<div style="position:absolute;left:603px;top:290px;width:1px;height:1px;background:#4a90e0;"></div>
<div style="position:absolute;left:244px;top:314px;width:735px;height:1px;background:#f0f0f0;"></div>
<div style="position:absolute;left:294px;top:298px;width:1px;height:17px;background:#f0f0f0;"></div>
<div style="position:absolute;left:359px;top:298px;width:1px;height:17px;background:#f0f0f0;"></div>
<div style="position:absolute;left:509px;top:298px;width:1px;height:17px;background:#f0f0f0;"></div>
<div style="position:absolute;left:594px;top:298px;width:1px;height:17px;background:#f0f0f0;"></div>
<div style="position:absolute;left:249.5px;top:297px;line-height:20px;font-size:11px;font-weight:normal;color:#000;white-space:pre;">6</div>
<div style="position:absolute;left:300px;top:307px;width:1px;height:1px;background:#d89850;"></div>
<div style="position:absolute;left:301px;top:307px;width:2px;height:1px;background:#000;"></div>
<div style="position:absolute;left:303px;top:307px;width:1px;height:1px;background:#4a90e0;"></div>
<div style="position:absolute;left:365px;top:307px;width:1px;height:1px;background:#d89850;"></div>
<div style="position:absolute;left:366px;top:307px;width:2px;height:1px;background:#000;"></div>
<div style="position:absolute;left:368px;top:307px;width:1px;height:1px;background:#4a90e0;"></div>
<div style="position:absolute;left:515px;top:307px;width:1px;height:1px;background:#d89850;"></div>
<div style="position:absolute;left:516px;top:307px;width:2px;height:1px;background:#000;"></div>
<div style="position:absolute;left:518px;top:307px;width:1px;height:1px;background:#4a90e0;"></div>
<div style="position:absolute;left:600px;top:307px;width:1px;height:1px;background:#d89850;"></div>
<div style="position:absolute;left:601px;top:307px;width:2px;height:1px;background:#000;"></div>
<div style="position:absolute;left:603px;top:307px;width:1px;height:1px;background:#4a90e0;"></div>
<div style="position:absolute;left:244px;top:331px;width:735px;height:1px;background:#f0f0f0;"></div>
<div style="position:absolute;left:294px;top:315px;width:1px;height:17px;background:#f0f0f0;"></div>
<div style="position:absolute;left:359px;top:315px;width:1px;height:17px;background:#f0f0f0;"></div>
<div style="position:absolute;left:509px;top:315px;width:1px;height:17px;background:#f0f0f0;"></div>
<div style="position:absolute;left:594px;top:315px;width:1px;height:17px;background:#f0f0f0;"></div>
<div style="position:absolute;left:249.5px;top:314px;line-height:20px;font-size:11px;font-weight:normal;color:#000;white-space:pre;">7</div>
<div style="position:absolute;left:300px;top:324px;width:1px;height:1px;background:#d89850;"></div>
<div style="position:absolute;left:301px;top:324px;width:2px;height:1px;background:#000;"></div>
<div style="position:absolute;left:303px;top:324px;width:1px;height:1px;background:#4a90e0;"></div>
<div style="position:absolute;left:365px;top:324px;width:1px;height:1px;background:#d89850;"></div>
<div style="position:absolute;left:366px;top:324px;width:2px;height:1px;background:#000;"></div>
<div style="position:absolute;left:368px;top:324px;width:1px;height:1px;background:#4a90e0;"></div>
<div style="position:absolute;left:515px;top:324px;width:1px;height:1px;background:#d89850;"></div>
<div style="position:absolute;left:516px;top:324px;width:2px;height:1px;background:#000;"></div>
<div style="position:absolute;left:518px;top:324px;width:1px;height:1px;background:#4a90e0;"></div>
<div style="position:absolute;left:600px;top:324px;width:1px;height:1px;background:#d89850;"></div>
<div style="position:absolute;left:601px;top:324px;width:2px;height:1px;background:#000;"></div>
<div style="position:absolute;left:603px;top:324px;width:1px;height:1px;background:#4a90e0;"></div>
<div style="position:absolute;left:244px;top:348px;width:735px;height:1px;background:#f0f0f0;"></div>
<div style="position:absolute;left:294px;top:332px;width:1px;height:17px;background:#f0f0f0;"></div>
<div style="position:absolute;left:359px;top:332px;width:1px;height:17px;background:#f0f0f0;"></div>
<div style="position:absolute;left:509px;top:332px;width:1px;height:17px;background:#f0f0f0;"></div>
<div style="position:absolute;left:594px;top:332px;width:1px;height:17px;background:#f0f0f0;"></div>
<div style="position:absolute;left:249.5px;top:331px;line-height:20px;font-size:11px;font-weight:normal;color:#000;white-space:pre;">8</div>
<div style="position:absolute;left:300px;top:341px;width:1px;height:1px;background:#d89850;"></div>
<div style="position:absolute;left:301px;top:341px;width:2px;height:1px;background:#000;"></div>
<div style="position:absolute;left:303px;top:341px;width:1px;height:1px;background:#4a90e0;"></div>
<div style="position:absolute;left:365px;top:341px;width:1px;height:1px;background:#d89850;"></div>
<div style="position:absolute;left:366px;top:341px;width:2px;height:1px;background:#000;"></div>
<div style="position:absolute;left:368px;top:341px;width:1px;height:1px;background:#4a90e0;"></div>
<div style="position:absolute;left:515px;top:341px;width:1px;height:1px;background:#d89850;"></div>
<div style="position:absolute;left:516px;top:341px;width:2px;height:1px;background:#000;"></div>
<div style="position:absolute;left:518px;top:341px;width:1px;height:1px;background:#4a90e0;"></div>
<div style="position:absolute;left:600px;top:341px;width:1px;height:1px;background:#d89850;"></div>
<div style="position:absolute;left:601px;top:341px;width:2px;height:1px;background:#000;"></div>
<div style="position:absolute;left:603px;top:341px;width:1px;height:1px;background:#4a90e0;"></div>
<div style="position:absolute;left:244px;top:365px;width:735px;height:1px;background:#f0f0f0;"></div>
<div style="position:absolute;left:294px;top:349px;width:1px;height:17px;background:#f0f0f0;"></div>
<div style="position:absolute;left:359px;top:349px;width:1px;height:17px;background:#f0f0f0;"></div>
<div style="position:absolute;left:509px;top:349px;width:1px;height:17px;background:#f0f0f0;"></div>
<div style="position:absolute;left:594px;top:349px;width:1px;height:17px;background:#f0f0f0;"></div>
<div style="position:absolute;left:249.5px;top:348px;line-height:20px;font-size:11px;font-weight:normal;color:#000;white-space:pre;">9</div>
<div style="position:absolute;left:300px;top:358px;width:1px;height:1px;background:#d89850;"></div>
<div style="position:absolute;left:301px;top:358px;width:2px;height:1px;background:#000;"></div>
<div style="position:absolute;left:303px;top:358px;width:1px;height:1px;background:#4a90e0;"></div>
<div style="position:absolute;left:365px;top:358px;width:1px;height:1px;background:#d89850;"></div>
<div style="position:absolute;left:366px;top:358px;width:2px;height:1px;background:#000;"></div>
<div style="position:absolute;left:368px;top:358px;width:1px;height:1px;background:#4a90e0;"></div>
<div style="position:absolute;left:515px;top:358px;width:1px;height:1px;background:#d89850;"></div>
<div style="position:absolute;left:516px;top:358px;width:2px;height:1px;background:#000;"></div>
<div style="position:absolute;left:518px;top:358px;width:1px;height:1px;background:#4a90e0;"></div>
<div style="position:absolute;left:600px;top:358px;width:1px;height:1px;background:#d89850;"></div>
<div style="position:absolute;left:601px;top:358px;width:2px;height:1px;background:#000;"></div>
<div style="position:absolute;left:603px;top:358px;width:1px;height:1px;background:#4a90e0;"></div>
<div style="position:absolute;left:244px;top:382px;width:735px;height:1px;background:#f0f0f0;"></div>
<div style="position:absolute;left:294px;top:366px;width:1px;height:17px;background:#f0f0f0;"></div>
<div style="position:absolute;left:359px;top:366px;width:1px;height:17px;background:#f0f0f0;"></div>
<div style="position:absolute;left:509px;top:366px;width:1px;height:17px;background:#f0f0f0;"></div>
<div style="position:absolute;left:594px;top:366px;width:1px;height:17px;background:#f0f0f0;"></div>
<div style="position:absolute;left:249.5px;top:365px;line-height:20px;font-size:11px;font-weight:normal;color:#000;white-space:pre;">10</div>
<div style="position:absolute;left:300px;top:375px;width:1px;height:1px;background:#d89850;"></div>
<div style="position:absolute;left:301px;top:375px;width:2px;height:1px;background:#000;"></div>
<div style="position:absolute;left:303px;top:375px;width:1px;height:1px;background:#4a90e0;"></div>
<div style="position:absolute;left:365px;top:375px;width:1px;height:1px;background:#d89850;"></div>
<div style="position:absolute;left:366px;top:375px;width:2px;height:1px;background:#000;"></div>
<div style="position:absolute;left:368px;top:375px;width:1px;height:1px;background:#4a90e0;"></div>
<div style="position:absolute;left:515px;top:375px;width:1px;height:1px;background:#d89850;"></div>
<div style="position:absolute;left:516px;top:375px;width:2px;height:1px;background:#000;"></div>
<div style="position:absolute;left:518px;top:375px;width:1px;height:1px;background:#4a90e0;"></div>
<div style="position:absolute;left:600px;top:375px;width:1px;height:1px;background:#d89850;"></div>
<div style="position:absolute;left:601px;top:375px;width:2px;height:1px;background:#000;"></div>
<div style="position:absolute;left:603px;top:375px;width:1px;height:1px;background:#4a90e0;"></div>
<div style="position:absolute;left:244px;top:399px;width:735px;height:1px;background:#f0f0f0;"></div>
<div style="position:absolute;left:294px;top:383px;width:1px;height:17px;background:#f0f0f0;"></div>
<div style="position:absolute;left:359px;top:383px;width:1px;height:17px;background:#f0f0f0;"></div>
<div style="position:absolute;left:509px;top:383px;width:1px;height:17px;background:#f0f0f0;"></div>
<div style="position:absolute;left:594px;top:383px;width:1px;height:17px;background:#f0f0f0;"></div>
<div style="position:absolute;left:249.5px;top:382px;line-height:20px;font-size:11px;font-weight:normal;color:#000;white-space:pre;">11</div>
<div style="position:absolute;left:300px;top:392px;width:1px;height:1px;background:#d89850;"></div>
<div style="position:absolute;left:301px;top:392px;width:2px;height:1px;background:#000;"></div>
<div style="position:absolute;left:303px;top:392px;width:1px;height:1px;background:#4a90e0;"></div>
<div style="position:absolute;left:365px;top:392px;width:1px;height:1px;background:#d89850;"></div>
<div style="position:absolute;left:366px;top:392px;width:2px;height:1px;background:#000;"></div>
<div style="position:absolute;left:368px;top:392px;width:1px;height:1px;background:#4a90e0;"></div>
<div style="position:absolute;left:515px;top:392px;width:1px;height:1px;background:#d89850;"></div>
<div style="position:absolute;left:516px;top:392px;width:2px;height:1px;background:#000;"></div>
<div style="position:absolute;left:518px;top:392px;width:1px;height:1px;background:#4a90e0;"></div>
<div style="position:absolute;left:600px;top:392px;width:1px;height:1px;background:#d89850;"></div>
<div style="position:absolute;left:601px;top:392px;width:2px;height:1px;background:#000;"></div>
<div style="position:absolute;left:603px;top:392px;width:1px;height:1px;background:#4a90e0;"></div>
<div style="position:absolute;left:244px;top:416px;width:735px;height:1px;background:#f0f0f0;"></div>
<div style="position:absolute;left:294px;top:400px;width:1px;height:17px;background:#f0f0f0;"></div>
<div style="position:absolute;left:359px;top:400px;width:1px;height:17px;background:#f0f0f0;"></div>
<div style="position:absolute;left:509px;top:400px;width:1px;height:17px;background:#f0f0f0;"></div>
<div style="position:absolute;left:594px;top:400px;width:1px;height:17px;background:#f0f0f0;"></div>
<div style="position:absolute;left:249.5px;top:399px;line-height:20px;font-size:11px;font-weight:normal;color:#000;white-space:pre;">12</div>
<div style="position:absolute;left:300px;top:409px;width:1px;height:1px;background:#d89850;"></div>
<div style="position:absolute;left:301px;top:409px;width:2px;height:1px;background:#000;"></div>
<div style="position:absolute;left:303px;top:409px;width:1px;height:1px;background:#4a90e0;"></div>
<div style="position:absolute;left:365px;top:409px;width:1px;height:1px;background:#d89850;"></div>
<div style="position:absolute;left:366px;top:409px;width:2px;height:1px;background:#000;"></div>
<div style="position:absolute;left:368px;top:409px;width:1px;height:1px;background:#4a90e0;"></div>
<div style="position:absolute;left:515px;top:409px;width:1px;height:1px;background:#d89850;"></div>
<div style="position:absolute;left:516px;top:409px;width:2px;height:1px;background:#000;"></div>
<div style="position:absolute;left:518px;top:409px;width:1px;height:1px;background:#4a90e0;"></div>
<div style="position:absolute;left:600px;top:409px;width:1px;height:1px;background:#d89850;"></div>
<div style="position:absolute;left:601px;top:409px;width:2px;height:1px;background:#000;"></div>
<div style="position:absolute;left:603px;top:409px;width:1px;height:1px;background:#4a90e0;"></div>
<div style="position:absolute;left:244px;top:433px;width:735px;height:1px;background:#f0f0f0;"></div>
<div style="position:absolute;left:294px;top:417px;width:1px;height:17px;background:#f0f0f0;"></div>
<div style="position:absolute;left:359px;top:417px;width:1px;height:17px;background:#f0f0f0;"></div>
<div style="position:absolute;left:509px;top:417px;width:1px;height:17px;background:#f0f0f0;"></div>
<div style="position:absolute;left:594px;top:417px;width:1px;height:17px;background:#f0f0f0;"></div>
<div style="position:absolute;left:249.5px;top:416px;line-height:20px;font-size:11px;font-weight:normal;color:#000;white-space:pre;">13</div>
<div style="position:absolute;left:300px;top:426px;width:1px;height:1px;background:#d89850;"></div>
<div style="position:absolute;left:301px;top:426px;width:2px;height:1px;background:#000;"></div>
<div style="position:absolute;left:303px;top:426px;width:1px;height:1px;background:#4a90e0;"></div>
<div style="position:absolute;left:365px;top:426px;width:1px;height:1px;background:#d89850;"></div>
<div style="position:absolute;left:366px;top:426px;width:2px;height:1px;background:#000;"></div>
<div style="position:absolute;left:368px;top:426px;width:1px;height:1px;background:#4a90e0;"></div>
<div style="position:absolute;left:515px;top:426px;width:1px;height:1px;background:#d89850;"></div>
<div style="position:absolute;left:516px;top:426px;width:2px;height:1px;background:#000;"></div>
<div style="position:absolute;left:518px;top:426px;width:1px;height:1px;background:#4a90e0;"></div>
<div style="position:absolute;left:600px;top:426px;width:1px;height:1px;background:#d89850;"></div>
<div style="position:absolute;left:601px;top:426px;width:2px;height:1px;background:#000;"></div>
<div style="position:absolute;left:603px;top:426px;width:1px;height:1px;background:#4a90e0;"></div>
<div style="position:absolute;left:244px;top:450px;width:735px;height:1px;background:#f0f0f0;"></div>
<div style="position:absolute;left:294px;top:434px;width:1px;height:17px;background:#f0f0f0;"></div>
<div style="position:absolute;left:359px;top:434px;width:1px;height:17px;background:#f0f0f0;"></div>
<div style="position:absolute;left:509px;top:434px;width:1px;height:17px;background:#f0f0f0;"></div>
<div style="position:absolute;left:594px;top:434px;width:1px;height:17px;background:#f0f0f0;"></div>
<div style="position:absolute;left:249.5px;top:433px;line-height:20px;font-size:11px;font-weight:normal;color:#000;white-space:pre;">14</div>
<div style="position:absolute;left:300px;top:443px;width:1px;height:1px;background:#d89850;"></div>
<div style="position:absolute;left:301px;top:443px;width:2px;height:1px;background:#000;"></div>
<div style="position:absolute;left:303px;top:443px;width:1px;height:1px;background:#4a90e0;"></div>
<div style="position:absolute;left:365px;top:443px;width:1px;height:1px;background:#d89850;"></div>
<div style="position:absolute;left:366px;top:443px;width:2px;height:1px;background:#000;"></div>
<div style="position:absolute;left:368px;top:443px;width:1px;height:1px;background:#4a90e0;"></div>
<div style="position:absolute;left:515px;top:443px;width:1px;height:1px;background:#d89850;"></div>
<div style="position:absolute;left:516px;top:443px;width:2px;height:1px;background:#000;"></div>
<div style="position:absolute;left:518px;top:443px;width:1px;height:1px;background:#4a90e0;"></div>
<div style="position:absolute;left:600px;top:443px;width:1px;height:1px;background:#d89850;"></div>
<div style="position:absolute;left:601px;top:443px;width:2px;height:1px;background:#000;"></div>
<div style="position:absolute;left:603px;top:443px;width:1px;height:1px;background:#4a90e0;"></div>
<div style="position:absolute;left:244px;top:467px;width:735px;height:1px;background:#f0f0f0;"></div>
<div style="position:absolute;left:294px;top:451px;width:1px;height:17px;background:#f0f0f0;"></div>
<div style="position:absolute;left:359px;top:451px;width:1px;height:17px;background:#f0f0f0;"></div>
<div style="position:absolute;left:509px;top:451px;width:1px;height:17px;background:#f0f0f0;"></div>
<div style="position:absolute;left:594px;top:451px;width:1px;height:17px;background:#f0f0f0;"></div>
<div style="position:absolute;left:249.5px;top:450px;line-height:20px;font-size:11px;font-weight:normal;color:#000;white-space:pre;">15</div>
<div style="position:absolute;left:300px;top:460px;width:1px;height:1px;background:#d89850;"></div>
<div style="position:absolute;left:301px;top:460px;width:2px;height:1px;background:#000;"></div>
<div style="position:absolute;left:303px;top:460px;width:1px;height:1px;background:#4a90e0;"></div>
<div style="position:absolute;left:365px;top:460px;width:1px;height:1px;background:#d89850;"></div>
<div style="position:absolute;left:366px;top:460px;width:2px;height:1px;background:#000;"></div>
<div style="position:absolute;left:368px;top:460px;width:1px;height:1px;background:#4a90e0;"></div>
<div style="position:absolute;left:515px;top:460px;width:1px;height:1px;background:#d89850;"></div>
<div style="position:absolute;left:516px;top:460px;width:2px;height:1px;background:#000;"></div>
<div style="position:absolute;left:518px;top:460px;width:1px;height:1px;background:#4a90e0;"></div>
<div style="position:absolute;left:600px;top:460px;width:1px;height:1px;background:#d89850;"></div>
<div style="position:absolute;left:601px;top:460px;width:2px;height:1px;background:#000;"></div>
<div style="position:absolute;left:603px;top:460px;width:1px;height:1px;background:#4a90e0;"></div>
<div style="position:absolute;left:244px;top:484px;width:735px;height:1px;background:#f0f0f0;"></div>
<div style="position:absolute;left:294px;top:468px;width:1px;height:17px;background:#f0f0f0;"></div>
<div style="position:absolute;left:359px;top:468px;width:1px;height:17px;background:#f0f0f0;"></div>
<div style="position:absolute;left:509px;top:468px;width:1px;height:17px;background:#f0f0f0;"></div>
<div style="position:absolute;left:594px;top:468px;width:1px;height:17px;background:#f0f0f0;"></div>
<div style="position:absolute;left:249.5px;top:467px;line-height:20px;font-size:11px;font-weight:normal;color:#000;white-space:pre;">16</div>
<div style="position:absolute;left:300px;top:477px;width:1px;height:1px;background:#d89850;"></div>
<div style="position:absolute;left:301px;top:477px;width:2px;height:1px;background:#000;"></div>
<div style="position:absolute;left:303px;top:477px;width:1px;height:1px;background:#4a90e0;"></div>
<div style="position:absolute;left:365px;top:477px;width:1px;height:1px;background:#d89850;"></div>
<div style="position:absolute;left:366px;top:477px;width:2px;height:1px;background:#000;"></div>
<div style="position:absolute;left:368px;top:477px;width:1px;height:1px;background:#4a90e0;"></div>
<div style="position:absolute;left:515px;top:477px;width:1px;height:1px;background:#d89850;"></div>
<div style="position:absolute;left:516px;top:477px;width:2px;height:1px;background:#000;"></div>
<div style="position:absolute;left:518px;top:477px;width:1px;height:1px;background:#4a90e0;"></div>
<div style="position:absolute;left:600px;top:477px;width:1px;height:1px;background:#d89850;"></div>
<div style="position:absolute;left:601px;top:477px;width:2px;height:1px;background:#000;"></div>
<div style="position:absolute;left:603px;top:477px;width:1px;height:1px;background:#4a90e0;"></div>
<div style="position:absolute;left:244px;top:501px;width:735px;height:1px;background:#f0f0f0;"></div>
<div style="position:absolute;left:294px;top:485px;width:1px;height:17px;background:#f0f0f0;"></div>
<div style="position:absolute;left:359px;top:485px;width:1px;height:17px;background:#f0f0f0;"></div>
<div style="position:absolute;left:509px;top:485px;width:1px;height:17px;background:#f0f0f0;"></div>
<div style="position:absolute;left:594px;top:485px;width:1px;height:17px;background:#f0f0f0;"></div>
<div style="position:absolute;left:249.5px;top:484px;line-height:20px;font-size:11px;font-weight:normal;color:#000;white-space:pre;">17</div>
<div style="position:absolute;left:300px;top:494px;width:1px;height:1px;background:#d89850;"></div>
<div style="position:absolute;left:301px;top:494px;width:2px;height:1px;background:#000;"></div>
<div style="position:absolute;left:303px;top:494px;width:1px;height:1px;background:#4a90e0;"></div>
<div style="position:absolute;left:365px;top:494px;width:1px;height:1px;background:#d89850;"></div>
<div style="position:absolute;left:366px;top:494px;width:2px;height:1px;background:#000;"></div>
<div style="position:absolute;left:368px;top:494px;width:1px;height:1px;background:#4a90e0;"></div>
<div style="position:absolute;left:515px;top:494px;width:1px;height:1px;background:#d89850;"></div>
<div style="position:absolute;left:516px;top:494px;width:2px;height:1px;background:#000;"></div>
<div style="position:absolute;left:518px;top:494px;width:1px;height:1px;background:#4a90e0;"></div>
<div style="position:absolute;left:600px;top:494px;width:1px;height:1px;background:#d89850;"></div>
<div style="position:absolute;left:601px;top:494px;width:2px;height:1px;background:#000;"></div>
<div style="position:absolute;left:603px;top:494px;width:1px;height:1px;background:#4a90e0;"></div>
<div style="position:absolute;left:244px;top:518px;width:735px;height:1px;background:#f0f0f0;"></div>
<div style="position:absolute;left:294px;top:502px;width:1px;height:17px;background:#f0f0f0;"></div>
<div style="position:absolute;left:359px;top:502px;width:1px;height:17px;background:#f0f0f0;"></div>
<div style="position:absolute;left:509px;top:502px;width:1px;height:17px;background:#f0f0f0;"></div>
<div style="position:absolute;left:594px;top:502px;width:1px;height:17px;background:#f0f0f0;"></div>
<div style="position:absolute;left:249.5px;top:501px;line-height:20px;font-size:11px;font-weight:normal;color:#000;white-space:pre;">18</div>
<div style="position:absolute;left:300px;top:511px;width:1px;height:1px;background:#d89850;"></div>
<div style="position:absolute;left:301px;top:511px;width:2px;height:1px;background:#000;"></div>
<div style="position:absolute;left:303px;top:511px;width:1px;height:1px;background:#4a90e0;"></div>
<div style="position:absolute;left:365px;top:511px;width:1px;height:1px;background:#d89850;"></div>
<div style="position:absolute;left:366px;top:511px;width:2px;height:1px;background:#000;"></div>
<div style="position:absolute;left:368px;top:511px;width:1px;height:1px;background:#4a90e0;"></div>
<div style="position:absolute;left:515px;top:511px;width:1px;height:1px;background:#d89850;"></div>
<div style="position:absolute;left:516px;top:511px;width:2px;height:1px;background:#000;"></div>
<div style="position:absolute;left:518px;top:511px;width:1px;height:1px;background:#4a90e0;"></div>
<div style="position:absolute;left:600px;top:511px;width:1px;height:1px;background:#d89850;"></div>
<div style="position:absolute;left:601px;top:511px;width:2px;height:1px;background:#000;"></div>
<div style="position:absolute;left:603px;top:511px;width:1px;height:1px;background:#4a90e0;"></div>
<div style="position:absolute;left:244px;top:535px;width:735px;height:1px;background:#f0f0f0;"></div>
<div style="position:absolute;left:294px;top:519px;width:1px;height:17px;background:#f0f0f0;"></div>
<div style="position:absolute;left:359px;top:519px;width:1px;height:17px;background:#f0f0f0;"></div>
<div style="position:absolute;left:509px;top:519px;width:1px;height:17px;background:#f0f0f0;"></div>
<div style="position:absolute;left:594px;top:519px;width:1px;height:17px;background:#f0f0f0;"></div>
<div style="position:absolute;left:249.5px;top:518px;line-height:20px;font-size:11px;font-weight:normal;color:#000;white-space:pre;">19</div>
<div style="position:absolute;left:300px;top:528px;width:1px;height:1px;background:#d89850;"></div>
<div style="position:absolute;left:301px;top:528px;width:2px;height:1px;background:#000;"></div>
<div style="position:absolute;left:303px;top:528px;width:1px;height:1px;background:#4a90e0;"></div>
<div style="position:absolute;left:365px;top:528px;width:1px;height:1px;background:#d89850;"></div>
<div style="position:absolute;left:366px;top:528px;width:2px;height:1px;background:#000;"></div>
<div style="position:absolute;left:368px;top:528px;width:1px;height:1px;background:#4a90e0;"></div>
<div style="position:absolute;left:515px;top:528px;width:1px;height:1px;background:#d89850;"></div>
<div style="position:absolute;left:516px;top:528px;width:2px;height:1px;background:#000;"></div>
<div style="position:absolute;left:518px;top:528px;width:1px;height:1px;background:#4a90e0;"></div>
<div style="position:absolute;left:600px;top:528px;width:1px;height:1px;background:#d89850;"></div>
<div style="position:absolute;left:601px;top:528px;width:2px;height:1px;background:#000;"></div>
<div style="position:absolute;left:603px;top:528px;width:1px;height:1px;background:#4a90e0;"></div>
<div style="position:absolute;left:244px;top:552px;width:735px;height:1px;background:#f0f0f0;"></div>
<div style="position:absolute;left:294px;top:536px;width:1px;height:17px;background:#f0f0f0;"></div>
<div style="position:absolute;left:359px;top:536px;width:1px;height:17px;background:#f0f0f0;"></div>
<div style="position:absolute;left:509px;top:536px;width:1px;height:17px;background:#f0f0f0;"></div>
<div style="position:absolute;left:594px;top:536px;width:1px;height:17px;background:#f0f0f0;"></div>
<div style="position:absolute;left:249.5px;top:535px;line-height:20px;font-size:11px;font-weight:normal;color:#000;white-space:pre;">20</div>
<div style="position:absolute;left:300px;top:545px;width:1px;height:1px;background:#d89850;"></div>
<div style="position:absolute;left:301px;top:545px;width:2px;height:1px;background:#000;"></div>
<div style="position:absolute;left:303px;top:545px;width:1px;height:1px;background:#4a90e0;"></div>
<div style="position:absolute;left:365px;top:545px;width:1px;height:1px;background:#d89850;"></div>
<div style="position:absolute;left:366px;top:545px;width:2px;height:1px;background:#000;"></div>
<div style="position:absolute;left:368px;top:545px;width:1px;height:1px;background:#4a90e0;"></div>
<div style="position:absolute;left:515px;top:545px;width:1px;height:1px;background:#d89850;"></div>
<div style="position:absolute;left:516px;top:545px;width:2px;height:1px;background:#000;"></div>
<div style="position:absolute;left:518px;top:545px;width:1px;height:1px;background:#4a90e0;"></div>
<div style="position:absolute;left:600px;top:545px;width:1px;height:1px;background:#d89850;"></div>
<div style="position:absolute;left:601px;top:545px;width:2px;height:1px;background:#000;"></div>
<div style="position:absolute;left:603px;top:545px;width:1px;height:1px;background:#4a90e0;"></div>
<div style="position:absolute;left:244px;top:569px;width:735px;height:1px;background:#f0f0f0;"></div>
<div style="position:absolute;left:294px;top:553px;width:1px;height:17px;background:#f0f0f0;"></div>
<div style="position:absolute;left:359px;top:553px;width:1px;height:17px;background:#f0f0f0;"></div>
<div style="position:absolute;left:509px;top:553px;width:1px;height:17px;background:#f0f0f0;"></div>
<div style="position:absolute;left:594px;top:553px;width:1px;height:17px;background:#f0f0f0;"></div>
<div style="position:absolute;left:249.5px;top:552px;line-height:20px;font-size:11px;font-weight:normal;color:#000;white-space:pre;">21</div>
<div style="position:absolute;left:300px;top:562px;width:1px;height:1px;background:#d89850;"></div>
<div style="position:absolute;left:301px;top:562px;width:2px;height:1px;background:#000;"></div>
<div style="position:absolute;left:303px;top:562px;width:1px;height:1px;background:#4a90e0;"></div>
<div style="position:absolute;left:365px;top:562px;width:1px;height:1px;background:#d89850;"></div>
<div style="position:absolute;left:366px;top:562px;width:2px;height:1px;background:#000;"></div>
<div style="position:absolute;left:368px;top:562px;width:1px;height:1px;background:#4a90e0;"></div>
<div style="position:absolute;left:515px;top:562px;width:1px;height:1px;background:#d89850;"></div>
<div style="position:absolute;left:516px;top:562px;width:2px;height:1px;background:#000;"></div>
<div style="position:absolute;left:518px;top:562px;width:1px;height:1px;background:#4a90e0;"></div>
<div style="position:absolute;left:600px;top:562px;width:1px;height:1px;background:#d89850;"></div>
<div style="position:absolute;left:601px;top:562px;width:2px;height:1px;background:#000;"></div>
<div style="position:absolute;left:603px;top:562px;width:1px;height:1px;background:#4a90e0;"></div>
<div style="position:absolute;left:244px;top:586px;width:735px;height:1px;background:#f0f0f0;"></div>
<div style="position:absolute;left:294px;top:570px;width:1px;height:17px;background:#f0f0f0;"></div>
<div style="position:absolute;left:359px;top:570px;width:1px;height:17px;background:#f0f0f0;"></div>
<div style="position:absolute;left:509px;top:570px;width:1px;height:17px;background:#f0f0f0;"></div>
<div style="position:absolute;left:594px;top:570px;width:1px;height:17px;background:#f0f0f0;"></div>
<div style="position:absolute;left:249.5px;top:569px;line-height:20px;font-size:11px;font-weight:normal;color:#000;white-space:pre;">22</div>
<div style="position:absolute;left:300px;top:579px;width:1px;height:1px;background:#d89850;"></div>
<div style="position:absolute;left:301px;top:579px;width:2px;height:1px;background:#000;"></div>
<div style="position:absolute;left:303px;top:579px;width:1px;height:1px;background:#4a90e0;"></div>
<div style="position:absolute;left:365px;top:579px;width:1px;height:1px;background:#d89850;"></div>
<div style="position:absolute;left:366px;top:579px;width:2px;height:1px;background:#000;"></div>
<div style="position:absolute;left:368px;top:579px;width:1px;height:1px;background:#4a90e0;"></div>
<div style="position:absolute;left:515px;top:579px;width:1px;height:1px;background:#d89850;"></div>
<div style="position:absolute;left:516px;top:579px;width:2px;height:1px;background:#000;"></div>
<div style="position:absolute;left:518px;top:579px;width:1px;height:1px;background:#4a90e0;"></div>
<div style="position:absolute;left:600px;top:579px;width:1px;height:1px;background:#d89850;"></div>
<div style="position:absolute;left:601px;top:579px;width:2px;height:1px;background:#000;"></div>
<div style="position:absolute;left:603px;top:579px;width:1px;height:1px;background:#4a90e0;"></div>
<div style="position:absolute;left:244px;top:603px;width:735px;height:1px;background:#f0f0f0;"></div>
<div style="position:absolute;left:294px;top:587px;width:1px;height:17px;background:#f0f0f0;"></div>
<div style="position:absolute;left:359px;top:587px;width:1px;height:17px;background:#f0f0f0;"></div>
<div style="position:absolute;left:509px;top:587px;width:1px;height:17px;background:#f0f0f0;"></div>
<div style="position:absolute;left:594px;top:587px;width:1px;height:17px;background:#f0f0f0;"></div>
<div style="position:absolute;left:249.5px;top:586px;line-height:20px;font-size:11px;font-weight:normal;color:#000;white-space:pre;">23</div>
<div style="position:absolute;left:300px;top:596px;width:1px;height:1px;background:#d89850;"></div>
<div style="position:absolute;left:301px;top:596px;width:2px;height:1px;background:#000;"></div>
<div style="position:absolute;left:303px;top:596px;width:1px;height:1px;background:#4a90e0;"></div>
<div style="position:absolute;left:365px;top:596px;width:1px;height:1px;background:#d89850;"></div>
<div style="position:absolute;left:366px;top:596px;width:2px;height:1px;background:#000;"></div>
<div style="position:absolute;left:368px;top:596px;width:1px;height:1px;background:#4a90e0;"></div>
<div style="position:absolute;left:515px;top:596px;width:1px;height:1px;background:#d89850;"></div>
<div style="position:absolute;left:516px;top:596px;width:2px;height:1px;background:#000;"></div>
<div style="position:absolute;left:518px;top:596px;width:1px;height:1px;background:#4a90e0;"></div>
<div style="position:absolute;left:600px;top:596px;width:1px;height:1px;background:#d89850;"></div>
<div style="position:absolute;left:601px;top:596px;width:2px;height:1px;background:#000;"></div>
<div style="position:absolute;left:603px;top:596px;width:1px;height:1px;background:#4a90e0;"></div>
<div style="position:absolute;left:244px;top:620px;width:735px;height:1px;background:#f0f0f0;"></div>
<div style="position:absolute;left:294px;top:604px;width:1px;height:17px;background:#f0f0f0;"></div>
<div style="position:absolute;left:359px;top:604px;width:1px;height:17px;background:#f0f0f0;"></div>
<div style="position:absolute;left:509px;top:604px;width:1px;height:17px;background:#f0f0f0;"></div>
<div style="position:absolute;left:594px;top:604px;width:1px;height:17px;background:#f0f0f0;"></div>
<div style="position:absolute;left:249.5px;top:603px;line-height:20px;font-size:11px;font-weight:normal;color:#000;white-space:pre;">24</div>
<div style="position:absolute;left:300px;top:613px;width:1px;height:1px;background:#d89850;"></div>
<div style="position:absolute;left:301px;top:613px;width:2px;height:1px;background:#000;"></div>
<div style="position:absolute;left:303px;top:613px;width:1px;height:1px;background:#4a90e0;"></div>
<div style="position:absolute;left:365px;top:613px;width:1px;height:1px;background:#d89850;"></div>
<div style="position:absolute;left:366px;top:613px;width:2px;height:1px;background:#000;"></div>
<div style="position:absolute;left:368px;top:613px;width:1px;height:1px;background:#4a90e0;"></div>
<div style="position:absolute;left:515px;top:613px;width:1px;height:1px;background:#d89850;"></div>
<div style="position:absolute;left:516px;top:613px;width:2px;height:1px;background:#000;"></div>
<div style="position:absolute;left:518px;top:613px;width:1px;height:1px;background:#4a90e0;"></div>
<div style="position:absolute;left:600px;top:613px;width:1px;height:1px;background:#d89850;"></div>
<div style="position:absolute;left:601px;top:613px;width:2px;height:1px;background:#000;"></div>
<div style="position:absolute;left:603px;top:613px;width:1px;height:1px;background:#4a90e0;"></div>
<div style="position:absolute;left:244px;top:637px;width:735px;height:1px;background:#f0f0f0;"></div>
<div style="position:absolute;left:294px;top:621px;width:1px;height:17px;background:#f0f0f0;"></div>
<div style="position:absolute;left:359px;top:621px;width:1px;height:17px;background:#f0f0f0;"></div>
<div style="position:absolute;left:509px;top:621px;width:1px;height:17px;background:#f0f0f0;"></div>
<div style="position:absolute;left:594px;top:621px;width:1px;height:17px;background:#f0f0f0;"></div>
<div style="position:absolute;left:249.5px;top:620px;line-height:20px;font-size:11px;font-weight:normal;color:#000;white-space:pre;">25</div>
<div style="position:absolute;left:300px;top:630px;width:1px;height:1px;background:#d89850;"></div>
<div style="position:absolute;left:301px;top:630px;width:2px;height:1px;background:#000;"></div>
<div style="position:absolute;left:303px;top:630px;width:1px;height:1px;background:#4a90e0;"></div>
<div style="position:absolute;left:365px;top:630px;width:1px;height:1px;background:#d89850;"></div>
<div style="position:absolute;left:366px;top:630px;width:2px;height:1px;background:#000;"></div>
<div style="position:absolute;left:368px;top:630px;width:1px;height:1px;background:#4a90e0;"></div>
<div style="position:absolute;left:515px;top:630px;width:1px;height:1px;background:#d89850;"></div>
<div style="position:absolute;left:516px;top:630px;width:2px;height:1px;background:#000;"></div>
<div style="position:absolute;left:518px;top:630px;width:1px;height:1px;background:#4a90e0;"></div>
<div style="position:absolute;left:600px;top:630px;width:1px;height:1px;background:#d89850;"></div>
<div style="position:absolute;left:601px;top:630px;width:2px;height:1px;background:#000;"></div>
<div style="position:absolute;left:603px;top:630px;width:1px;height:1px;background:#4a90e0;"></div>
<div style="position:absolute;left:979px;top:189px;width:16px;height:452px;background:#f0f0f0;"></div>
<div style="position:absolute;left:979px;top:206px;width:15px;height:17px;background:#cdcdcd;"></div>
<svg style="position:absolute;left:982px;top:195px" width="10" height="7"><path d="M1.2 5.5 L5 1.8 L8.8 5.5" stroke="#555555" stroke-width="2" fill="none"/></svg>
<svg style="position:absolute;left:982px;top:628px" width="10" height="7"><path d="M1.2 1.5 L5 5.2 L8.8 1.5" stroke="#555555" stroke-width="2" fill="none"/></svg>
<div style="position:absolute;left:243px;top:641px;width:736px;height:16px;background:#f0f0f0;"></div>
<div style="position:absolute;left:261px;top:641px;width:698px;height:15px;background:#cdcdcd;"></div>
<svg style="position:absolute;left:248px;top:644px" width="7" height="10"><path d="M5.5 1.2 L1.8 5 L5.5 8.8" stroke="#555555" stroke-width="2" fill="none"/></svg>
<svg style="position:absolute;left:966px;top:644px" width="7" height="10"><path d="M1.5 1.2 L5.2 5 L1.5 8.8" stroke="#555555" stroke-width="2" fill="none"/></svg>
<div style="position:absolute;left:979px;top:641px;width:16px;height:16px;background:#f0f0f0;"></div>
<div style="position:absolute;left:779px;top:132px;width:101px;height:19px;border:1px solid #005499;background:#cce4f7;"></div>
<div style="position:absolute;left:779px;top:153px;width:103px;height:1px;background:#1a6cbc;"></div>
<svg style="position:absolute;left:868px;top:139px" width="11" height="7"><path d="M0.8 0.8 L5.5 5.5 L10.2 0.8" stroke="#505050" stroke-width="1.1" fill="none"/></svg>
<div style="position:absolute;left:784px;top:158px;width:98px;height:23px;box-shadow:2px 2px 3px rgba(0,0,0,0.38);background:transparent"></div>
<div style="position:absolute;left:779px;top:154px;width:101px;height:27px;border:1px solid #0078d7;border-top:none;border-bottom:none;background:#fff"></div>
<div style="position:absolute;left:779px;top:167px;width:103px;height:14px;background:#0078d7;"></div>
<div style="position:absolute;left:781.5px;top:164px;line-height:20px;font-size:11px;font-weight:normal;color:#fff;white-space:pre;letter-spacing:-0.3px">РТР#1</div>
<div style="position:absolute;left:770px;top:161px;width:116px;height:22px;border:3px solid #ff0000;border-radius:2px"></div>
<div style="position:absolute;left:1px;top:669px;width:1005px;height:1px;background:#ffffff;"></div>
<div style="position:absolute;left:1px;top:670px;width:1005px;height:1px;background:#a0a0a0;"></div>
<div style="position:absolute;left:1px;top:671px;width:1005px;height:20px;background:#f0f0f0;"></div>
<div style="position:absolute;left:558px;top:673px;width:1px;height:16px;background:#c8c8c8;"></div>
<div style="position:absolute;left:3px;top:672px;line-height:20px;font-size:11px;font-weight:normal;color:#000;white-space:pre;letter-spacing:-0.12px">Таблицы получены из ППКОП</div>
<div style="position:absolute;left:562.5px;top:672px;line-height:20px;font-size:11px;font-weight:normal;color:#000;white-space:pre;letter-spacing:-0.04px">Связь с ППКОП установлена. Режим конфигурирования.</div>
<div style="position:absolute;left:1004px;top:682px;width:2px;height:2px;background:#b8b8b8;"></div>
<div style="position:absolute;left:1001px;top:685px;width:2px;height:2px;background:#b8b8b8;"></div>
<div style="position:absolute;left:1004px;top:685px;width:2px;height:2px;background:#b8b8b8;"></div>
<div style="position:absolute;left:998px;top:688px;width:2px;height:2px;background:#b8b8b8;"></div>
<div style="position:absolute;left:1001px;top:688px;width:2px;height:2px;background:#b8b8b8;"></div>
<div style="position:absolute;left:1004px;top:688px;width:2px;height:2px;background:#b8b8b8;"></div>
<div style="position:absolute;left:1px;top:690px;width:1005px;height:1px;background:#ffffff;"></div>
<div style="position:absolute;left:0px;top:691px;width:1006px;height:1px;background:#2b2b2b;"></div>
<div style="position:absolute;left:0px;top:0px;width:1px;height:692px;background:#2b2b2b;"></div>
</body></html>
